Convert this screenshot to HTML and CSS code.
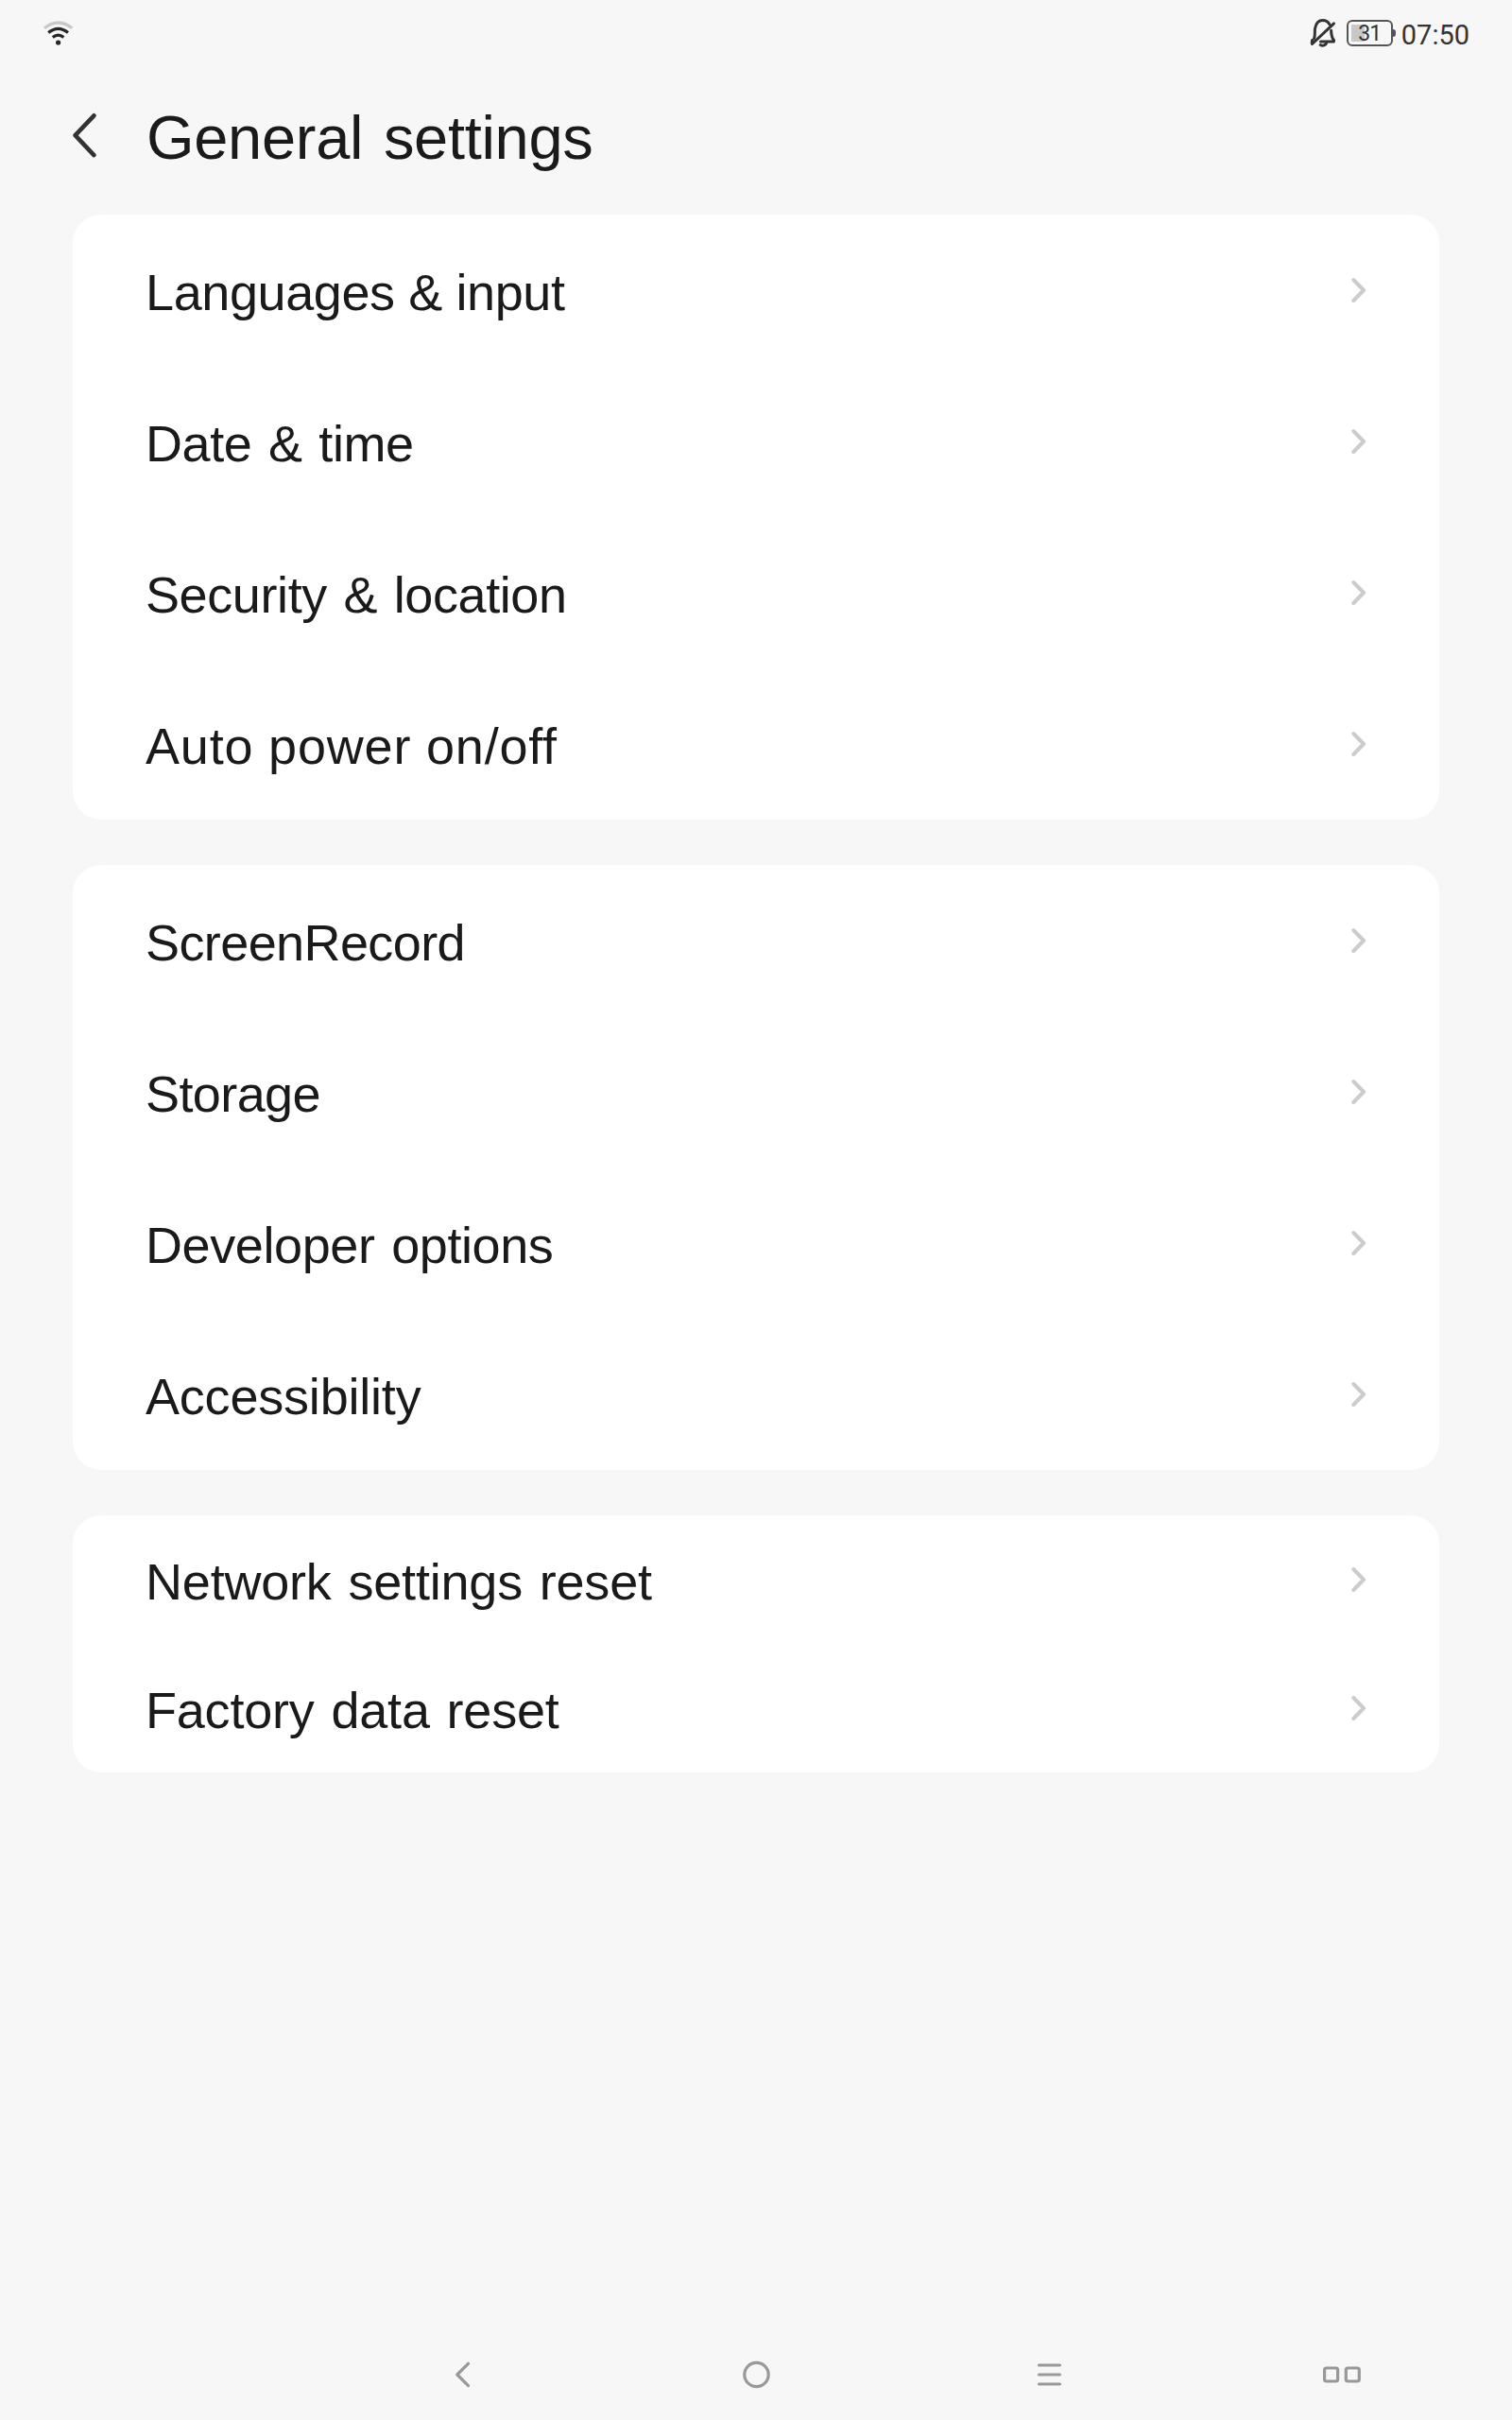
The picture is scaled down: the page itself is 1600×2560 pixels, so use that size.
FILE: index.html
```html
<!DOCTYPE html>
<html lang="en">

<head>
  <meta charset="UTF-8">
  <meta name="viewport" content="width=device-width, initial-scale=1.0">
  <link rel="stylesheet" href="styles.css">
  <title>General settings</title>
</head>

<body>

  <!-- shared icons -->
  <svg class="sprite">
    <symbol id="chevron" viewBox="0 0 16 28">
      <path d="M2.3 3 L13 14 L2.3 25" />
    </symbol>
  </svg>

  <!-- status bar -->
  <div class="status-bar">
    <svg class="wifi" viewBox="0 0 32 26">
      <path class="wifi-weak" d="M1 7.8 Q15.6 -3.8 30.3 7.8" />
      <path d="M5.2 12.6 Q15.6 4.2 26 12.6" />
      <path d="M9.8 17.5 Q15.6 12.8 21.4 17.5" />
      <circle cx="15.6" cy="23" r="2.6" />
    </svg>
    <div class="status-right">
      <svg class="bell" viewBox="0 0 28 32">
        <path d="M4.5 22 C6 19 5 14 5.6 11 C6.6 5.5 9.8 2.6 13.7 2.6 C17 2.6 19.4 4.2 20.9 6.8" />
        <path d="M22.6 13.2 C22.7 17.5 23 20.5 25.6 23.8 L25.4 25 H11.5" />
        <path d="M2.5 27.5 L25.5 5.8" />
        <path d="M2.6 23.5 L2.2 26.5" />
        <path d="M11.2 28.5 C13.5 30 17.5 29.2 17.8 25.5" />
      </svg>
      <div class="battery"><span>31</span></div>
      <span class="clock">07:50</span>
    </div>
  </div>

  <!-- title -->
  <div class="header">
    <svg class="back" viewBox="0 0 28 48">
      <path d="M25.4 3.3 L5.6 24.2 L25.4 45.1" />
    </svg>
    <h1>General settings</h1>
  </div>

  <div class="settings">
    <div class="card">
      <div class="row"><span class="close-words">Languages &amp; input</span><svg class="arrow"><use href="#chevron" /></svg></div>
      <div class="row"><span>Date &amp; time</span><svg class="arrow"><use href="#chevron" /></svg></div>
      <div class="row"><span>Security &amp; location</span><svg class="arrow"><use href="#chevron" /></svg></div>
      <div class="row"><span class="close-words loose">Auto power on/off</span><svg class="arrow"><use href="#chevron" /></svg></div>
    </div>
    <div class="card">
      <div class="row"><span class="tight">ScreenRecord</span><svg class="arrow"><use href="#chevron" /></svg></div>
      <div class="row"><span class="tight">Storage</span><svg class="arrow"><use href="#chevron" /></svg></div>
      <div class="row"><span>Developer options</span><svg class="arrow"><use href="#chevron" /></svg></div>
      <div class="row"><span class="normal">Accessibility</span><svg class="arrow"><use href="#chevron" /></svg></div>
    </div>
    <div class="card compact">
      <div class="row"><span class="normal">Network settings reset</span><svg class="arrow"><use href="#chevron" /></svg></div>
      <div class="row"><span class="normal">Factory data reset</span><svg class="arrow"><use href="#chevron" /></svg></div>
    </div>
  </div>

  <!-- navigation bar -->
  <div class="nav-bar">
    <svg viewBox="0 0 44 34"><path d="M27.5 5.3 L15.8 17 L27.5 28.7" /></svg>
    <svg viewBox="0 0 44 34"><circle cx="22.5" cy="17" r="12.7" /></svg>
    <svg viewBox="0 0 44 34"><path d="M11.5 7 H33.5 M11.5 17 H33.5 M11.5 27 H33.5" /></svg>
    <svg viewBox="0 0 44 34">
      <rect x="3.6" y="10" width="14" height="14" rx="2" />
      <rect x="26.3" y="10" width="14" height="14" rx="2" />
    </svg>
  </div>

</body>

</html>
```
FILE: styles.css
```css
body {
  margin: 0;
  height: 2560px;
  display: flex;
  flex-direction: column;
  background-color: #f7f7f7;
  color: #1a1a1a;
  font-family: "Liberation Sans", Arial, sans-serif;
}

svg {
  fill: none;
  stroke-linecap: round;
  stroke-linejoin: round;
}

.sprite {
  display: none;
}

/* status bar */
.status-bar {
  display: flex;
  align-items: center;
  justify-content: space-between;
  height: 70px;
  padding: 0 45px 0 46px;
}

.wifi {
  width: 32px;
  height: 26px;
  stroke: #262626;
  stroke-width: 3.2;
  stroke-linecap: butt;
}

.wifi .wifi-weak {
  stroke: #c8c8c8;
}

.wifi circle {
  fill: #262626;
  stroke: none;
}

.status-right {
  display: flex;
  align-items: center;
  font-family: Roboto, sans-serif;
  color: #333;
}

.bell {
  width: 28px;
  height: 32px;
  margin-right: 11px;
  stroke: #333;
  stroke-width: 3;
}

.battery {
  position: relative;
  box-sizing: border-box;
  width: 49px;
  height: 28px;
  margin-right: 9px;
  border: 2px solid #555;
  border-radius: 6px;
  font-size: 23px;
  line-height: 25px;
  text-align: center;
  /* charge level */
  background: linear-gradient(#c8c8c8, #c8c8c8) 3px 3px / 14px 18px no-repeat;
}

.battery span {
  letter-spacing: -1px;
}

.battery::after {
  content: "";
  position: absolute;
  right: -5px;
  top: 8px;
  width: 3px;
  height: 8px;
  border-radius: 0 3px 3px 0;
  background-color: #555;
}

.clock {
  margin-top: 3px;
  font-size: 29px;
  line-height: 30px;
}

/* title */
.header {
  display: flex;
  align-items: center;
  height: 145px;
  padding: 0 74px;
}

.back {
  width: 28px;
  height: 48px;
  stroke: #333;
  stroke-width: 4.6;
}

.header h1 {
  margin: 6px 0 0 53px;
  font-size: 65px;
  font-weight: normal;
  line-height: 74px;
  letter-spacing: -0.3px;
  word-spacing: 4px;
}

/* setting groups */
.settings {
  flex: 1;
  display: flex;
  flex-direction: column;
  gap: 48px;
  padding: 12px 77px 0;
}

.card {
  background-color: #fff;
  border-radius: 30px;
}

.row {
  display: flex;
  align-items: center;
  justify-content: space-between;
  height: 160px;
  padding: 0 77px;
}

.compact .row {
  height: 136px;
}

.row span {
  padding-top: 4px;
  font-size: 54px;
  line-height: 62px;
  letter-spacing: -0.4px;
  word-spacing: 3px;
}

.row .close-words {
  word-spacing: 0;
}

.row .loose {
  letter-spacing: 0.8px;
}

.row .normal {
  letter-spacing: -0.2px;
}

.row .tight {
  letter-spacing: -0.6px;
}

.arrow {
  width: 16px;
  height: 28px;
  stroke: #ccc;
  stroke-width: 4;
}

/* navigation bar */
.nav-bar {
  display: grid;
  grid-template-columns: repeat(4, 310px);
  place-items: center;
  height: 96px;
  padding-left: 335px;
}

.nav-bar svg {
  width: 44px;
  height: 34px;
  stroke: #999;
  stroke-width: 3.2;
}
```
